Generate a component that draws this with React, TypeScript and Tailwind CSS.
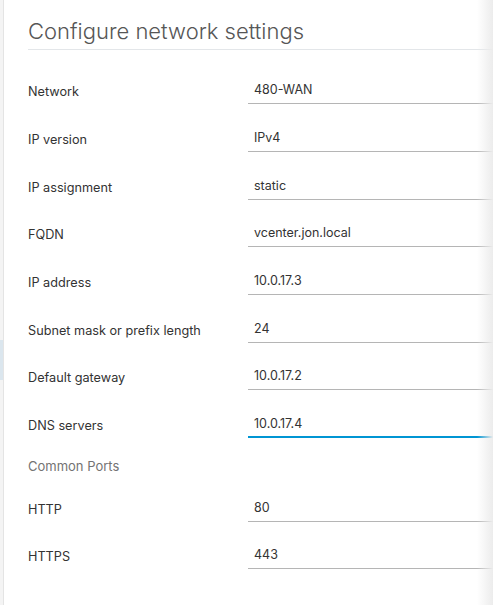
import React from "react";

const rows = [
  { label: "Network", value: "480-WAN" },
  { label: "IP version", value: "IPv4" },
  { label: "IP assignment", value: "static" },
  { label: "FQDN", value: "vcenter.jon.local" },
  { label: "IP address", value: "10.0.17.3" },
  { label: "Subnet mask or prefix length", value: "24" },
  { label: "Default gateway", value: "10.0.17.2" },
  { label: "DNS servers", value: "10.0.17.4", focused: true },
];

const ports = [
  { label: "HTTP", value: "80" },
  { label: "HTTPS", value: "443" },
];

function Field({
  label,
  value,
  focused,
}: {
  label: string;
  value: string;
  focused?: boolean;
}) {
  return (
    <div className="flex items-end h-[47.7px]">
      <div className="w-[220px] shrink-0 text-[12.7px] text-[#333] pb-[4px] leading-[16px]">
        {label}
      </div>
      <div
        className={
          focused
            ? "flex-1 h-[24px] border-b-2 border-[#0095d3] pl-[6px] text-[12.5px] text-[#333] leading-[20px]"
            : "flex-1 h-[24px] border-b border-[#b5b5b5] pl-[6px] text-[12.5px] text-[#333] leading-[20px]"
        }
      >
        {value}
      </div>
    </div>
  );
}

export default function App() {
  return (
    <div
      className="relative flex w-[493px] h-[605px] overflow-hidden bg-white"
      style={{ fontFamily: "Inter, 'Noto Sans', sans-serif" }}
    >
      {/* side rail */}
      <div className="w-[3px] shrink-0 bg-[#f4f4f4] flex flex-col">
        <div className="h-[340px]" />
        <div className="h-[40px] bg-[#dbe6ee]" />
      </div>
      <div className="w-px shrink-0 bg-[#e4e4e4]" />

      <div className="flex-1 pl-[24px]">
        <div className="h-[50px] border-b border-[#e3e6e9] pt-[17px]">
          <h3 className="text-[22px] font-light text-[#565656] leading-[28px]">
            Configure network settings
          </h3>
        </div>

        <div className="pt-[6.5px]">
          {rows.map((r) => (
            <Field key={r.label} {...r} />
          ))}
        </div>

        <div className="pt-[20px] text-[13px] text-[#737373] leading-[16px]">
          Common Ports
        </div>
        <div>
          {ports.map((r) => (
            <Field key={r.label} {...r} />
          ))}
        </div>
      </div>

      {/* right edge fade */}
      <div className="absolute right-0 top-0 bottom-0 w-[16px] bg-gradient-to-r from-white/0 to-[#ececec]" />
    </div>
  );
}
